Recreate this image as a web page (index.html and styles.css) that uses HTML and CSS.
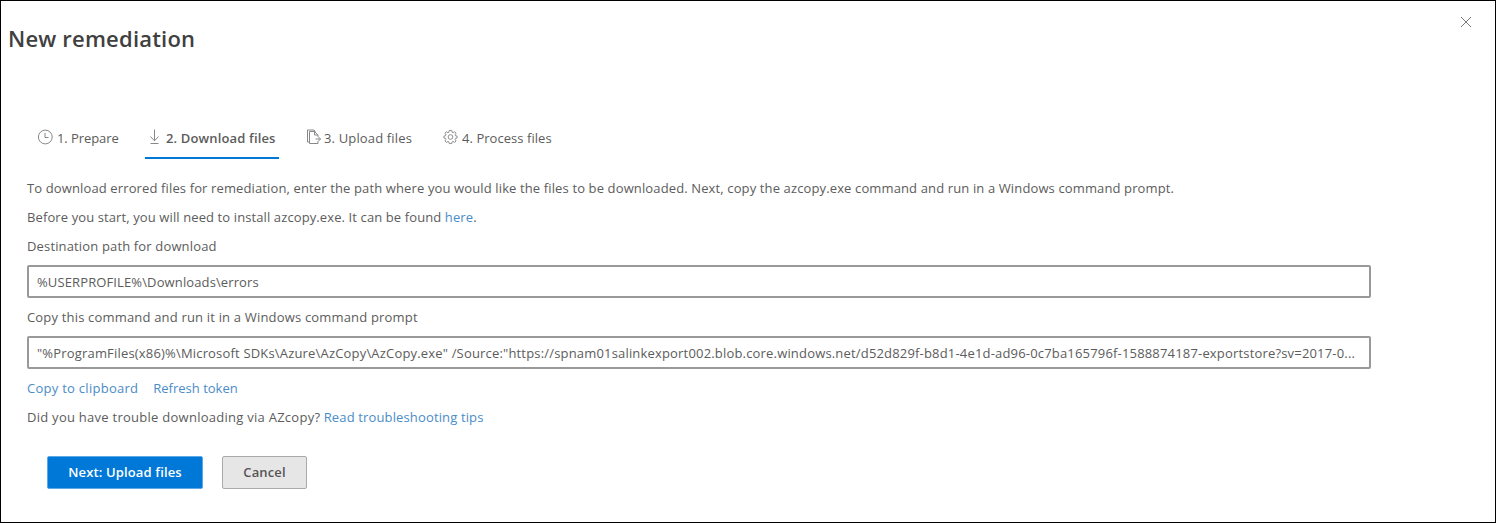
FILE: index.html
```html
<!DOCTYPE html>
<html lang="en">
<head>
<meta charset="utf-8">
<title>New remediation</title>
<link rel="stylesheet" href="styles.css">
</head>
<body>
<main class="panel">
  <header class="header">
    <h1 class="title">New remediation</h1>
    <button class="close" aria-label="Close"><svg width="12" height="12" viewBox="0 0 12 12"><path d="M1 1l10 10M11 1L1 11"/></svg></button>
  </header>
  <nav class="tabs">
    <a class="tab tab-prepare"><svg class="icon" width="16" height="16" viewBox="0 0 16 16"><circle cx="8.300" cy="8" r="6.900"/><path d="M8 4v4.500h3.500"/></svg><span>1. Prepare</span></a>
    <a class="tab tab-download active"><svg class="icon" width="12" height="16" viewBox="0 0 12 16"><path d="M5.500 .5v11.500M1.500 7.500l4 4.300 4-4.300M1.500 14.500h8"/></svg><span>2. Download files</span></a>
    <a class="tab tab-upload"><svg class="icon" width="15" height="16" viewBox="0 0 15 16"><path d="M3.500 2.500h5l3.500 3.500v2M8.500 2.500v3.500h3.500M3.500 2.500v12h8.500v-2.500M3.500 13h-2V1h6.500l1.500 1.500M9.500 10h5M12.500 8l2 2-2 2"/></svg><span>3. Upload files</span></a>
    <a class="tab tab-process"><svg class="icon" width="15" height="16" viewBox="0 0 16 16"><path d="M6.700 1h2.600l.4 1.900 1 .5 1.700-1.100 1.500 1.600-1 1.700.4 1 1.700.4v2.100l-1.700.4-.4 1 1 1.700-1.500 1.600-1.700-1.100-1 .5-.4 1.800H6.700l-.4-1.800-1-.5-1.700 1.100-1.500-1.600 1-1.700-.4-1L1 9.100V7l1.700-.4.4-1-1-1.700 1.500-1.600 1.700 1.100 1-.5z"/><circle cx="8" cy="8" r="2.500"/></svg><span>4. Process files</span></a>
  </nav>
  <section class="content">
    <p class="line intro">To download errored files for remediation, enter the path where you would like the files to be downloaded. Next, copy the azcopy.exe command and run in a Windows command prompt.</p>
    <p class="line before">Before you start, you will need to install azcopy.exe. It can be found <a class="link">here</a>.</p>
    <p class="line label-path">Destination path for download</p>
    <div class="field field-path">%USERPROFILE%\Downloads\errors</div>
    <p class="line label-command">Copy this command and run it in a Windows command prompt</p>
    <div class="field field-command">"%ProgramFiles(x86)%\Microsoft SDKs\Azure\AzCopy\AzCopy.exe" /Source:"https://spnam01salinkexport002.blob.core.windows.net/d52d829f-b8d1-4e1d-ad96-0c7ba165796f-1588874187-exportstore?sv=2017-0...</div>
    <p class="line links"><a class="link copy">Copy to clipboard</a><a class="link">Refresh token</a></p>
    <p class="line"><span class="trouble">Did you have trouble downloading via AZcopy?</span> <a class="link tips">Read troubleshooting tips</a></p>
  </section>
  <footer class="actions">
    <button class="btn primary">Next: Upload files</button>
    <button class="btn secondary">Cancel</button>
  </footer>
</main>
</body>
</html>
```
FILE: styles.css
```css
* { box-sizing: border-box; }
body { margin: 0; background: #fff; color: #5c5c5c; font: 13px/20px "Open Sans", "Noto Sans", sans-serif; white-space: nowrap; }
.panel { width: 1496px; height: 523px; border: 1px solid #000; overflow: hidden; }
.header { display: flex; justify-content: space-between; height: 123px; padding: 15px 23px 0 7px; }
.title { margin: 5px 0 0; font-size: 22px; line-height: 34px; font-weight: 600; letter-spacing: .2px; color: #404040; }
.close { width: 12px; height: 12px; padding: 0; border: 0; background: none; }
.close svg { display: block; fill: none; stroke: #777; }
.tabs { display: flex; height: 36px; padding-left: 36px; }
.tab { display: flex; gap: 4px; height: 35px; padding-top: 4px; }
.tab-prepare { width: 108px; letter-spacing: -.08px; }
.tab-download { width: 134px; margin-right: 27px; gap: 5px; padding-left: 4px; letter-spacing: .15px; }
.tab-upload { width: 137px; gap: 3px; letter-spacing: .15px; }
.tab-process { letter-spacing: .05px; }
.active { font-weight: 600; border-bottom: 2px solid #0078d7; }
.icon { margin-top: 1px; fill: none; stroke: #888; }
.content { padding: 18px 0 0 26px; }
.line { margin: 0 0 9px; }
.intro { letter-spacing: .127px; }
.before { letter-spacing: .107px; }
.label-path { letter-spacing: .15px; }
.label-command { letter-spacing: .18px; }
.field { width: 1344px; height: 33px; margin-bottom: 9px; padding: 5px 8px; border: 2px solid #999; border-radius: 2px; }
.field-path { letter-spacing: .12px; }
.field-command { letter-spacing: .179px; }
.link { color: #4a8cc8; }
.links { display: flex; gap: 15px; }
.copy { letter-spacing: .27px; }
.trouble { letter-spacing: .264px; }
.tips { letter-spacing: .14px; }
.actions { display: flex; gap: 19px; padding: 20px 0 0 46px; }
.btn { height: 33px; padding: 0 0 2px; font: 600 13px/20px "Open Sans", sans-serif; letter-spacing: .14px; border-radius: 2px; }
.primary { width: 156px; background: #0078d7; color: #fff; border: 1px solid #5ca7e6; }
.secondary { width: 85px; background: #e6e6e6; color: #555; border: 1px solid #aaa; }
```
